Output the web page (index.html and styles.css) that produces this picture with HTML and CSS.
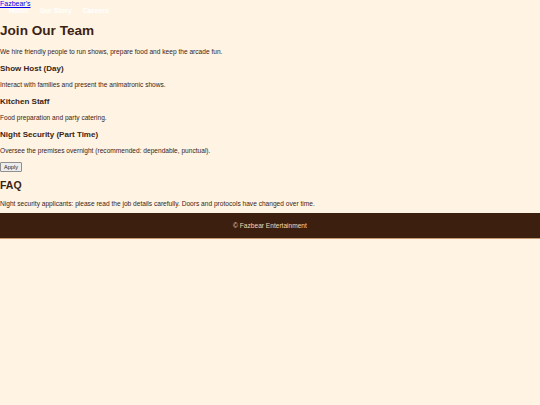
FILE: index.html
```html
<!DOCTYPE html>
<html lang="en">
<head>
<meta charset="utf-8">
<title>Careers - Fazbear's</title>
<link rel="stylesheet" href="styles.css">
</head>
<body>
<header class="site-header">
  <a class="brand" href="#">Fazbear's</a>
  <nav class="nav">
    <a href="#">Home</a>
    <a href="#">Our Story</a>
    <a href="#">Careers</a>
  </nav>
</header>
<main class="content">
  <h1 class="title">Join Our Team</h1>
  <p class="text">We hire friendly people to run shows, prepare food and keep the arcade fun.</p>
  <h3 class="job">Show Host (Day)</h3>
  <p class="text">Interact with families and present the animatronic shows.</p>
  <h3 class="job">Kitchen Staff</h3>
  <p class="text">Food preparation and party catering.</p>
  <h3 class="job">Night Security (Part Time)</h3>
  <p class="text">Oversee the premises overnight (recommended: dependable, punctual).</p>
  <button class="apply">Apply</button>
  <h2 class="faq">FAQ</h2>
  <p class="text last">Night security applicants: please read the job details carefully. Doors and protocols have changed over time.</p>
</main>
<footer class="footer">© Fazbear Entertainment</footer>
</body>
</html>
```
FILE: styles.css
```css
html, body {
  margin: 0;
  padding: 0;
  background: #fff4e3;
}
body {
  font-family: "Liberation Sans", Arial, sans-serif;
  font-size: 6.6px;
  color: #3b2314;
}
.site-header {
  display: flex;
  flex-direction: column;
}
.brand {
  font-size: 7px;
  color: #0000ee;
  text-decoration: underline;
  line-height: 8px;
  align-self: flex-start;
}
.nav {
  display: flex;
  gap: 11px;
  padding-left: 9px;
  line-height: 6px;
  margin: 0;
}
.nav a {
  color: #ffffff;
  text-decoration: none;
  font-weight: bold;
  font-size: 7px;
}
.content {
  padding: 0;
}
.title {
  font-size: 13.6px;
  font-weight: bold;
  margin: 9px 0;
  line-height: 16px;
}
.text {
  margin: 6.5px 0;
  line-height: 8px;
}
.text.last {
  margin-bottom: 5.5px;
}
.job {
  font-size: 8px;
  font-weight: bold;
  margin: 7.5px 0;
  line-height: 10px;
}
.apply {
  font-family: "Liberation Sans", Arial, sans-serif;
  font-size: 5.6px;
  padding: 1px 3px;
  margin: 0;
  border: 1px solid #8f8f8f;
  background: #ececec;
  border-radius: 1px;
  color: #222;
  display: block;
}
.faq {
  font-size: 10.5px;
  font-weight: bold;
  margin: 8px 0 9px;
  line-height: 11px;
}
.footer {
  background: #3d1f10;
  color: #f2d8b4;
  text-align: center;
  font-size: 6.6px;
  line-height: 8px;
  padding: 8.5px 0;
  border-bottom: 1px solid #c49a72;
}
```
